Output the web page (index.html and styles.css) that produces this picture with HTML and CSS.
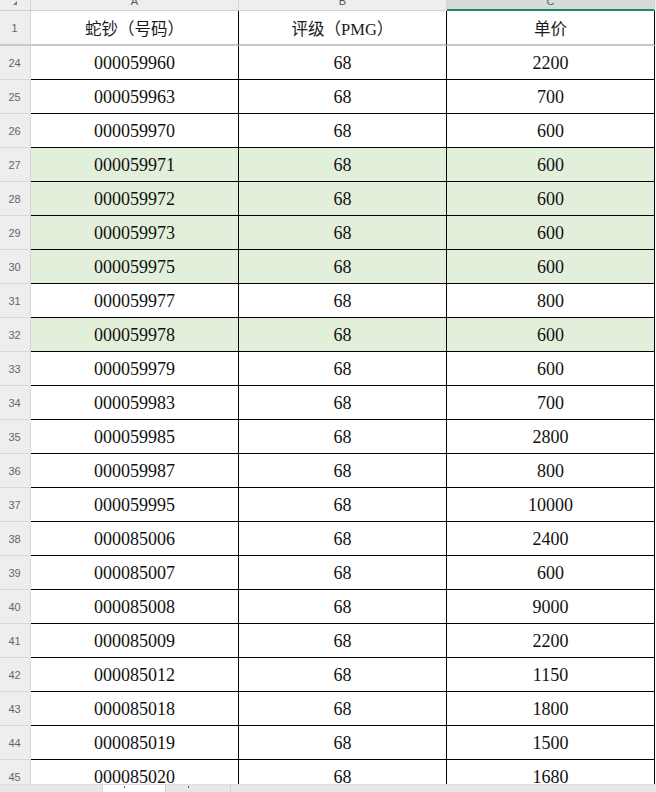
FILE: index.html
```html
<!DOCTYPE html>
<html lang="zh">
<head>
<meta charset="utf-8">
<link rel="stylesheet" href="styles.css">
</head>
<body>
<div class="sheet">
  <div class="colhead">
    <div class="corner"><span class="tri"></span></div>
    <div class="ch"><span class="letter">A</span></div>
    <div class="ch"><span class="letter">B</span></div>
    <div class="ch sel"><span class="letter">C</span></div>
    <div class="ch-end"></div>
  </div>
  <div class="row head">
    <div class="rn">1</div>
    <div class="c hc">蛇钞（号码）</div>
    <div class="c hc">评级（PMG）</div>
    <div class="c hc">单价</div>
  </div>
  <div class="rows">
    <div class="row"><div class="rn">24</div><div class="c">000059960</div><div class="c">68</div><div class="c">2200</div></div>
    <div class="row"><div class="rn">25</div><div class="c">000059963</div><div class="c">68</div><div class="c">700</div></div>
    <div class="row"><div class="rn">26</div><div class="c">000059970</div><div class="c">68</div><div class="c">600</div></div>
    <div class="row hl"><div class="rn">27</div><div class="c">000059971</div><div class="c">68</div><div class="c">600</div></div>
    <div class="row hl"><div class="rn">28</div><div class="c">000059972</div><div class="c">68</div><div class="c">600</div></div>
    <div class="row hl"><div class="rn">29</div><div class="c">000059973</div><div class="c">68</div><div class="c">600</div></div>
    <div class="row hl"><div class="rn">30</div><div class="c">000059975</div><div class="c">68</div><div class="c">600</div></div>
    <div class="row"><div class="rn">31</div><div class="c">000059977</div><div class="c">68</div><div class="c">800</div></div>
    <div class="row hl"><div class="rn">32</div><div class="c">000059978</div><div class="c">68</div><div class="c">600</div></div>
    <div class="row"><div class="rn">33</div><div class="c">000059979</div><div class="c">68</div><div class="c">600</div></div>
    <div class="row"><div class="rn">34</div><div class="c">000059983</div><div class="c">68</div><div class="c">700</div></div>
    <div class="row"><div class="rn">35</div><div class="c">000059985</div><div class="c">68</div><div class="c">2800</div></div>
    <div class="row"><div class="rn">36</div><div class="c">000059987</div><div class="c">68</div><div class="c">800</div></div>
    <div class="row"><div class="rn">37</div><div class="c">000059995</div><div class="c">68</div><div class="c">10000</div></div>
    <div class="row"><div class="rn">38</div><div class="c">000085006</div><div class="c">68</div><div class="c">2400</div></div>
    <div class="row"><div class="rn">39</div><div class="c">000085007</div><div class="c">68</div><div class="c">600</div></div>
    <div class="row"><div class="rn">40</div><div class="c">000085008</div><div class="c">68</div><div class="c">9000</div></div>
    <div class="row"><div class="rn">41</div><div class="c">000085009</div><div class="c">68</div><div class="c">2200</div></div>
    <div class="row"><div class="rn">42</div><div class="c">000085012</div><div class="c">68</div><div class="c">1150</div></div>
    <div class="row"><div class="rn">43</div><div class="c">000085018</div><div class="c">68</div><div class="c">1800</div></div>
    <div class="row"><div class="rn">44</div><div class="c">000085019</div><div class="c">68</div><div class="c">1500</div></div>
    <div class="row"><div class="rn">45</div><div class="c">000085020</div><div class="c">68</div><div class="c">1680</div></div>
  </div>
  <div class="tabs">
    <div class="tab-space"></div>
    <div class="tab active"><span class="mark green"></span></div>
    <div class="tab"><span class="mark"></span></div>
  </div>
</div>
</body>
</html>
```
FILE: styles.css
```css
html, body {
  margin: 0;
  padding: 0;
  background: #ffffff;
}

.sheet {
  width: 656px;
  height: 792px;
  display: flex;
  flex-direction: column;
  overflow: hidden;
  background: #ffffff;
}

.colhead {
  display: grid;
  grid-template-columns: 31px 208px 208px 208px 1px;
  height: 11px;
  flex-shrink: 0;
}

.corner {
  background: #eeeeee;
  border-right: 1px solid #d6d6d6;
  border-bottom: 1px solid #d0d0d0;
  box-sizing: border-box;
  position: relative;
}

.tri {
  position: absolute;
  left: 13px;
  top: 1px;
  width: 0;
  height: 0;
  border-left: 4px solid transparent;
  border-bottom: 4px solid #7a7a7a;
}

.ch {
  background: #eeeeee;
  border-right: 1px solid #d6d6d6;
  border-bottom: 1px solid #d0d0d0;
  box-sizing: border-box;
  overflow: hidden;
  display: flex;
  justify-content: center;
  align-items: flex-end;
}

.ch.sel {
  background: #dadada;
  border-bottom: 2px solid #1e8a5c;
}

.ch-end {
  background: #eeeeee;
  border-bottom: 1px solid #d0d0d0;
  box-sizing: border-box;
}

.letter {
  font-family: "Liberation Sans", Arial, sans-serif;
  font-size: 11px;
  line-height: 11px;
  color: #555555;
  margin-bottom: 3px;
}

.ch.sel .letter {
  color: #1e7a52;
  margin-bottom: 2px;
}

.rows {
  flex: 1;
  min-height: 0;
  overflow: hidden;
}

.row {
  display: grid;
  grid-template-columns: 31px 208px 208px 208px;
  height: 34px;
}

.row.head {
  height: 35px;
  flex-shrink: 0;
}

.rn {
  background: #eeeeee;
  border-right: 1px solid #d6d6d6;
  border-bottom: 1px solid #d8d8d8;
  box-sizing: border-box;
  color: #666666;
  font-family: "Liberation Sans", Arial, sans-serif;
  font-size: 11px;
  display: flex;
  align-items: center;
  justify-content: center;
  padding-right: 1px;
}

.c {
  border-right: 1px solid #000000;
  border-bottom: 1px solid #000000;
  box-sizing: border-box;
  display: flex;
  align-items: center;
  justify-content: center;
  font-family: "Liberation Serif", "Times New Roman", serif;
  font-size: 18px;
  color: #111111;
  padding-top: 2px;
}

.row.hl .c {
  background: #e2efda;
}

.row.head .rn,
.row.head .c {
  border-bottom: 2px solid #c9c9c9;
}

.hc {
  font-family: "Liberation Serif", "Noto Sans CJK SC", serif;
  font-size: 16.5px;
  color: #1a1a1a;
  padding-top: 1px;
}

.tabs {
  height: 8px;
  flex-shrink: 0;
  background: #e6e8eb;
  border-top: 1px solid #dcdfe3;
  box-sizing: border-box;
  display: flex;
}

.tab-space {
  width: 102px;
}

.tab {
  width: 65px;
  border-right: 1px solid #cfd2d6;
  box-sizing: border-box;
  display: flex;
  justify-content: center;
  padding-right: 20px;
}

.tab.active {
  width: 64px;
  background: #ffffff;
  border-left: 1px solid #d6d9dd;
}

.mark {
  width: 1px;
  height: 2px;
  margin-top: 1px;
  background: #555555;
}

.mark.green {
  background: #1e8a5c;
}
```
